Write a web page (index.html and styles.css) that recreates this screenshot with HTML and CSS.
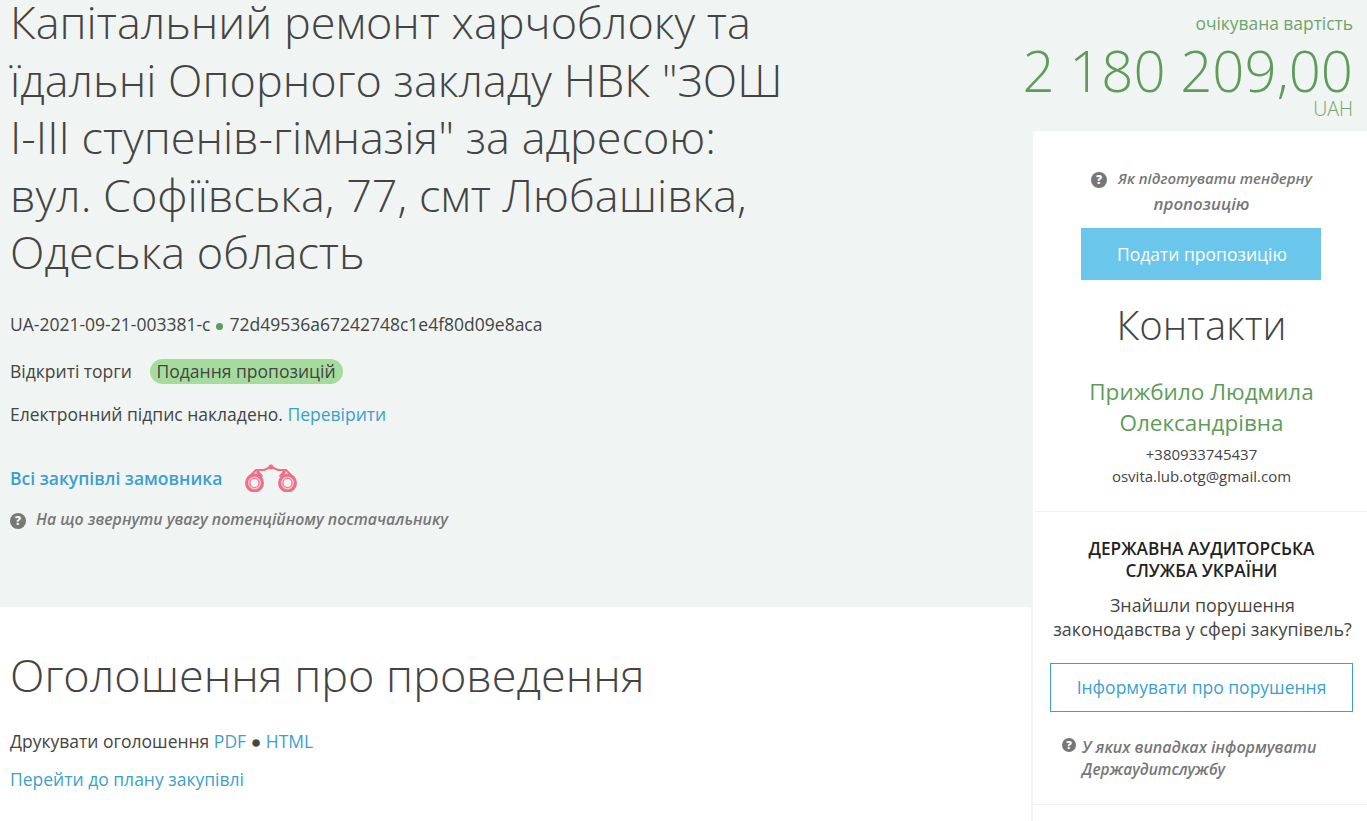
FILE: index.html
```html
<!DOCTYPE html>
<html lang="uk">
<head>
    <meta charset="UTF-8">
    <title>Капітальний ремонт харчоблоку</title>
    <link rel="stylesheet" href="styles.css">
</head>
<body>
<div class="page">
    <div class="main">
        <div class="hero">
            <h1 class="title">Капітальний ремонт харчоблоку та їдальні Опорного закладу НВК "ЗОШ I-III ступенів-гімназія" за адресою: вул. Софіївська, 77, смт Любашівка, Одеська область</h1>
            <p class="ids">UA-2021-09-21-003381-c<span class="dot"></span>72d49536a67242748c1e4f80d09e8aca</p>
            <p class="status-row">Відкриті торги <span class="status">Подання пропозицій</span></p>
            <p class="sign">Електронний підпис накладено. <a href="#">Перевірити</a></p>
            <p class="buyer">
                <a href="#">Всі закупівлі замовника</a>
                <svg class="binoculars" width="52" height="28" viewBox="0 0 52 28" fill="none" stroke="#ec7088">
                    <path d="M3 14 L11 6 L19 6 L26 3 L33 6 L41 6 L49 14" stroke-width="2.2"/>
                    <path d="M12 7 L17 13 M40 7 L35 13" stroke-width="3"/>
                    <circle cx="26" cy="3" r="2.6" fill="#ec7088" stroke="none"/>
                    <circle cx="9.5" cy="19" r="8" stroke-width="3" fill="#f7c6cf"/>
                    <circle cx="9.5" cy="19" r="4.5" stroke-width="1.2" fill="#f0f4f2"/>
                    <circle cx="42.5" cy="19" r="8" stroke-width="3" fill="#f7c6cf"/>
                    <circle cx="42.5" cy="19" r="4.5" stroke-width="1.2" fill="#f0f4f2"/>
                </svg>
            </p>
            <p class="hint hint-left"><span class="q">?</span><em>На що звернути увагу потенційному постачальнику</em></p>
        </div>
        <div class="notice">
            <h2 class="notice-title">Оголошення про проведення</h2>
            <p class="print">Друкувати оголошення <a href="#">PDF</a> ● <a href="#">HTML</a></p>
            <p class="plan"><a href="#">Перейти до плану закупівлі</a></p>
        </div>
    </div>
    <div class="side">
        <div class="price">
            <div class="price-label">очікувана вартість</div>
            <div class="price-value">2 180 209,00</div>
            <div class="price-cur">UAH</div>
        </div>
        <div class="side-box">
            <div class="block block-contacts">
                <p class="hint hint-center"><span class="q">?</span><em>Як підготувати тендерну <span class="word-wide">пропозицію</span></em></p>
                <a class="btn-offer" href="#">Подати пропозицію</a>
                <h3 class="contacts-title">Контакти</h3>
                <div class="contact-name">Прижбило Людмила Олександрівна</div>
                <div class="contact-line">+380933745437</div>
                <div class="contact-line">osvita.lub.otg@gmail.com</div>
            </div>
            <div class="block block-audit">
                <div class="audit-title">ДЕРЖАВНА АУДИТОРСЬКА СЛУЖБА УКРАЇНИ</div>
                <p class="audit-text">Знайшли порушення законодавства у сфері закупівель?</p>
                <a class="btn-report" href="#">Інформувати про порушення</a>
                <p class="hint hint-audit"><span class="q q-small">?</span><em>У яких випадках інформувати <span class="word-narrow">Держаудитслужбу</span></em></p>
            </div>
        </div>
    </div>
</div>
</body>
</html>
```

FILE: styles.css
```css
html, body{
    margin: 0;
    height: 821px;
    overflow: hidden;
}
body{
    background-color: #fff;
    color: #444;
    font-family: "Open Sans", sans-serif;
    font-size: 17.5px;
}
a{
    color: #3c9fd0;
    text-decoration: none;
}
p{
    margin: 0;
}
.page{
    display: flex;
}
.main{
    width: 1031px;
}
.hero{
    height: 607px;
    box-sizing: border-box;
    padding: 0 10px;
    background-color: #f0f4f2;
    overflow: hidden;
}
.title{
    width: 785px;
    margin: -7px 0 31px;
    font-size: 45px;
    font-weight: 300;
    line-height: 57.5px;
    color: #444;
}
.ids{
    line-height: 24px;
}
.dot{
    display: inline-block;
    width: 7px;
    height: 7px;
    margin: 0 6px 1px 6px;
    border-radius: 50%;
    background-color: #5b9e57;
}
.status-row{
    margin-top: 23px;
    line-height: 25px;
}
.status{
    display: inline-block;
    margin-left: 13px;
    padding: 0 7px;
    border-radius: 13px;
    background-color: #a5dc9d;
}
.sign{
    margin-top: 18px;
    line-height: 24px;
}
.buyer{
    display: flex;
    align-items: center;
    gap: 23px;
    margin-top: 36px;
    height: 32px;
    font-weight: 600;
}
.binoculars{
    width: 52px;
    height: 28px;
}
.hint{
    color: #777;
    font-size: 15px;
    font-weight: 600;
}
.hint em{
    font-style: italic;
}
.q{
    display: inline-block;
    width: 16px;
    height: 16px;
    border-radius: 50%;
    background-color: #777;
    color: #fff;
    font-size: 12px;
    font-weight: 800;
    line-height: 16px;
    text-align: center;
}
.hero .q{
    color: #f0f4f2;
}
.hint-left{
    margin-top: 13px;
    font-size: 15.85px;
    line-height: 24px;
}
.hint-left .q{
    margin: 0 10px 0 0;
}
.notice{
    padding: 36px 10px 0;
}
.notice-title{
    margin: 0;
    font-size: 45px;
    font-weight: 300;
    line-height: 64px;
}
.print{
    margin-top: 22px;
    line-height: 24px;
}
.plan{
    margin-top: 14px;
    line-height: 24px;
}
.side{
    width: 336px;
}
.price{
    display: flex;
    flex-direction: column;
    align-items: flex-end;
    height: 131px;
    box-sizing: border-box;
    padding: 11px 14px 0 0;
    background-color: #f0f4f2;
    color: #5f9c5a;
}
.price-label{
    color: #6fa56b;
    font-size: 17.4px;
    line-height: 25px;
}
.price-value{
    margin-top: 5px;
    font-size: 56.3px;
    font-weight: 300;
    line-height: 58px;
    white-space: nowrap;
}
.price-cur{
    color: #6fa56b;
    font-size: 19.5px;
    font-weight: 300;
    line-height: 22px;
    margin-top: -1px;
}
.side-box{
    height: 690px;
    box-sizing: border-box;
    padding-left: 1px;
    border-left: 2px solid #f0f4f2;
    background-color: #fff;
}
.block{
    box-sizing: border-box;
    border-bottom: 1px solid #eef1f0;
    text-align: center;
}
.block-contacts{
    height: 381px;
    padding: 34px 0 0 2px;
}
.hint-center{
    width: 240px;
    margin: 0 auto;
    line-height: 26px;
}
.hint-center .q{
    margin-right: 11px;
}
.word-wide{
    font-size: 16.9px;
}
.word-narrow{
    font-size: 15.4px;
}
.btn-offer{
    display: block;
    width: 240px;
    height: 52px;
    margin: 11px 0 0 45px;
    background-color: #6bc6ec;
    color: #fff;
    line-height: 52px;
    text-indent: 2px;
}
.contacts-title{
    margin: 16px 0 0;
    font-size: 40px;
    font-weight: 300;
    line-height: 58px;
}
.contact-name{
    width: 260px;
    margin: 22px auto 0;
    color: #5f9c5a;
    font-size: 22.5px;
    line-height: 31px;
}
.contact-line{
    font-size: 15px;
    line-height: 22px;
}
.contact-name + .contact-line{
    margin-top: 5px;
}
.block-audit{
    height: 293px;
    padding: 26px 14px 0 16px;
}
.audit-title{
    width: 260px;
    margin: 0 auto;
    color: #222;
    font-size: 17.2px;
    font-weight: 600;
    line-height: 22px;
}
.audit-text{
    width: 305px;
    margin: 12px auto 0;
    font-size: 17.85px;
    line-height: 23.5px;
}
.btn-report{
    display: block;
    box-sizing: border-box;
    height: 49px;
    margin-top: 22px;
    border: 1px solid #3c9fd0;
    line-height: 47px;
}
.hint-audit{
    display: flex;
    gap: 6px;
    margin: 24px 0 0 12px;
    font-size: 16px;
    line-height: 22px;
    text-align: left;
}
.q-small{
    flex: none;
    width: 14px;
    height: 14px;
    margin-top: 2px;
    font-size: 11px;
    line-height: 14px;
}
```
